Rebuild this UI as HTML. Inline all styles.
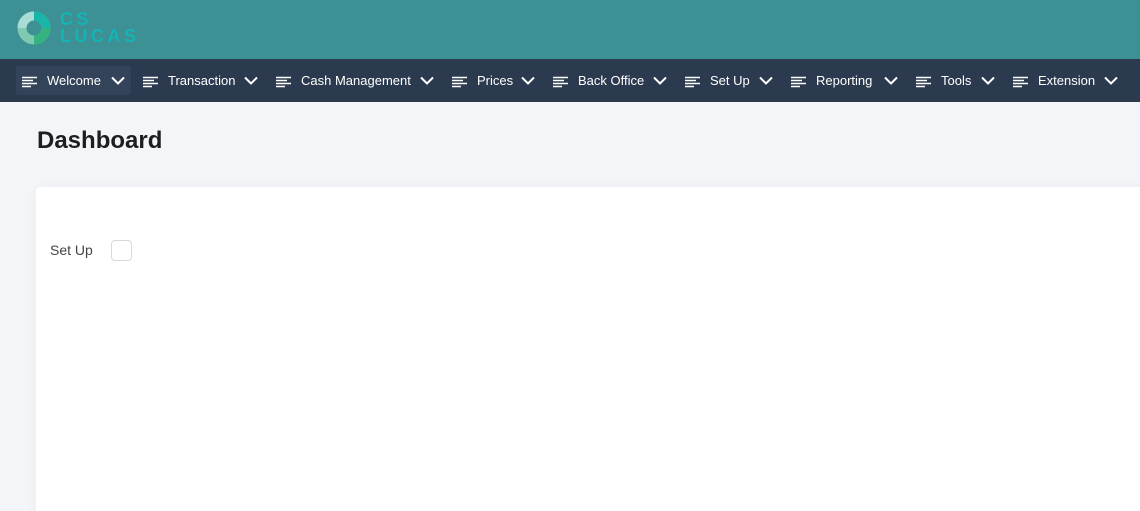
<!DOCTYPE html>
<html><head><style>
*{margin:0;padding:0;box-sizing:border-box}
html,body{width:1140px;height:511px;overflow:hidden}
body{background:#f3f6f9;font-family:"Liberation Sans",sans-serif;position:relative}
.hdr{position:absolute;left:0;top:0;width:1140px;height:59px;background:#3d9094}
.nav{position:absolute;left:0;top:59px;width:1140px;height:43px;background:#2b3a4e}
.hl{position:absolute;left:16px;top:7px;width:115px;height:29px;background:#33445a;border-radius:3px}
.it{position:absolute;top:0;height:43px;line-height:44px;color:#fff;font-size:13px}
.logo{position:absolute;left:60px;top:11px;font:bold 18px/17px "Liberation Sans",sans-serif;color:#16b3b4;letter-spacing:3.5px}
h1{position:absolute;left:37px;top:127px;font-size:24px;font-weight:bold;color:#1e1e1e}
.card{position:absolute;left:36px;top:187px;width:1120px;height:330px;background:#fff;border-radius:4px;box-shadow:0 0 12px rgba(0,0,0,.04)}
.lbl{position:absolute;left:50px;top:242px;font-size:14px;color:#444}
.cb{position:absolute;left:111px;top:240px;width:21px;height:21px;border:1.5px solid #d5d9e0;border-radius:4px;background:#fff}
</style></head><body>
<div class="hdr">
<svg style="position:absolute;left:17px;top:11px" width="34" height="34" viewBox="0 0 34 34">
<circle cx="17" cy="17" r="12" fill="none" stroke="#7fc9b3" stroke-width="9"/>
<path d="M17 5 A12 12 0 0 1 29 17" fill="none" stroke="#19b5a8" stroke-width="9"/>
<path d="M29 17 A12 12 0 0 1 17 29" fill="none" stroke="#34b37e" stroke-width="9"/>
<path d="M5 17 A12 12 0 0 1 17 5" fill="none" stroke="#a9dcd5" stroke-width="9"/>
</svg>
<div class="logo">CS<br>LUCAS</div>
</div>
<div class="nav"><div class="hl"></div></div>
<div id="items"></div>
<h1>Dashboard</h1>
<div class="card"></div>
<div class="lbl">Set Up</div><div class="cb"></div>
<script>
var d=[["Welcome",22,47,111],["Transaction",143,168,244],["Cash Management",276,301,420],["Prices",452,477,521],["Back Office",553,578,653],["Set Up",685,710,759],["Reporting",791,816,884],["Tools",916,941,981],["Extension",1013,1038,1104]];
var h='';
d.forEach(function(a){
h+='<svg style="left:'+a[1]+'px;top:76px;position:absolute" width="15" height="12"><path d="M0 1.5H15M0 4.5H11M0 7.5H15M0 10.5H9" stroke="#fff" stroke-width="1.4"/></svg>';
h+='<div class="it" style="left:'+a[2]+'px;top:59px">'+a[0]+'</div>';
h+='<svg style="position:absolute;left:'+a[3]+'px;top:76px" width="14" height="9"><path d="M1 1.5L7 7.5L13 1.5" fill="none" stroke="#fff" stroke-width="2"/></svg>';
});
document.getElementById('items').innerHTML=h;
</script>
</body></html>
